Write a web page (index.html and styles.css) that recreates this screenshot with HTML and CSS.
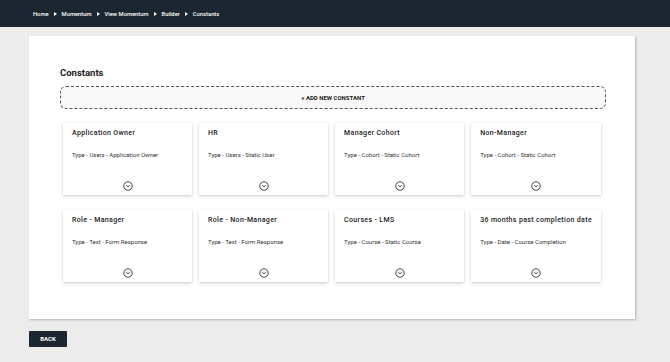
FILE: index.html
```html
<!DOCTYPE html>
<html lang="en">
<head>
    <meta charset="UTF-8">
    <meta name="viewport" content="width=device-width, initial-scale=1.0">
    <title>Constants</title>
    <link rel="stylesheet" href="styles.css">
</head>
<body>
    <div class="header">
        <div class="breadcrumb">
            <a href="#">Home</a>
            <span class="sep"></span>
            <a href="#">Momentum</a>
            <span class="sep"></span>
            <a href="#">View Momentum</a>
            <span class="sep"></span>
            <a href="#">Builder</a>
            <span class="sep"></span>
            <span>Constants</span>
        </div>
    </div>
    <div class="panel">
        <h1>Constants</h1>
        <button class="add-btn">+ ADD NEW CONSTANT</button>
        <div class="cards">
            <div class="card">
                <div class="card-title">Application Owner</div>
                <div class="card-type">Type - Users - Application Owner</div>
                <svg class="expand" viewBox="0 0 10 10"><circle cx="5" cy="5" r="4.2"/><path d="M3.2 4.2 L5 6 L6.8 4.2"/></svg>
            </div>
            <div class="card">
                <div class="card-title">HR</div>
                <div class="card-type">Type - Users - Static User</div>
                <svg class="expand" viewBox="0 0 10 10"><circle cx="5" cy="5" r="4.2"/><path d="M3.2 4.2 L5 6 L6.8 4.2"/></svg>
            </div>
            <div class="card">
                <div class="card-title">Manager Cohort</div>
                <div class="card-type">Type - Cohort - Static Cohort</div>
                <svg class="expand" viewBox="0 0 10 10"><circle cx="5" cy="5" r="4.2"/><path d="M3.2 4.2 L5 6 L6.8 4.2"/></svg>
            </div>
            <div class="card">
                <div class="card-title">Non-Manager</div>
                <div class="card-type">Type - Cohort - Static Cohort</div>
                <svg class="expand" viewBox="0 0 10 10"><circle cx="5" cy="5" r="4.2"/><path d="M3.2 4.2 L5 6 L6.8 4.2"/></svg>
            </div>
            <div class="card">
                <div class="card-title">Role - Manager</div>
                <div class="card-type">Type - Text - Form Response</div>
                <svg class="expand" viewBox="0 0 10 10"><circle cx="5" cy="5" r="4.2"/><path d="M3.2 4.2 L5 6 L6.8 4.2"/></svg>
            </div>
            <div class="card">
                <div class="card-title">Role - Non-Manager</div>
                <div class="card-type">Type - Text - Form Response</div>
                <svg class="expand" viewBox="0 0 10 10"><circle cx="5" cy="5" r="4.2"/><path d="M3.2 4.2 L5 6 L6.8 4.2"/></svg>
            </div>
            <div class="card">
                <div class="card-title">Courses - LMS</div>
                <div class="card-type">Type - Course - Static Course</div>
                <svg class="expand" viewBox="0 0 10 10"><circle cx="5" cy="5" r="4.2"/><path d="M3.2 4.2 L5 6 L6.8 4.2"/></svg>
            </div>
            <div class="card">
                <div class="card-title">36 months past completion date</div>
                <div class="card-type">Type - Date - Course Completion</div>
                <svg class="expand" viewBox="0 0 10 10"><circle cx="5" cy="5" r="4.2"/><path d="M3.2 4.2 L5 6 L6.8 4.2"/></svg>
            </div>
        </div>
    </div>
    <div class="footer">
        <button class="back-btn">BACK</button>
    </div>
</body>
</html>
```
FILE: styles.css
```css
body {
    font-family: Roboto, "Liberation Sans", sans-serif;
    margin: 0;
    padding: 0;
    background-color: #ececec;
    color: #222;
}

.header {
    height: 27px;
    background-color: #1b2630;
    display: flex;
    align-items: center;
    padding-left: 33px;
}

.breadcrumb {
    display: flex;
    align-items: center;
    gap: 5px;
    font-size: 5.8px;
    font-weight: 500;
    color: #fff;
}

.breadcrumb a {
    color: #fff;
    text-decoration: none;
}

.breadcrumb .sep {
    width: 0;
    height: 0;
    border-top: 2px solid transparent;
    border-bottom: 2px solid transparent;
    border-left: 3px solid #fff;
}

.panel {
    width: 546px;
    margin: 9px 0 0 29px;
    padding: 31px 29px 37px 31px;
    background-color: #fff;
    box-shadow: 1px 1px 2px rgba(0, 0, 0, 0.25);
}

h1 {
    margin: 0 0 7px;
    font-size: 9.5px;
    line-height: 12px;
    font-weight: 700;
    color: #222;
}

.add-btn {
    display: block;
    width: 100%;
    height: 23px;
    margin: 0 0 14px;
    padding: 0;
    background-color: #f8f8f8;
    border: 1px dashed #555;
    border-radius: 6px;
    font-family: inherit;
    font-size: 6px;
    font-weight: 700;
    color: #222;
    cursor: pointer;
}

.cards {
    display: grid;
    grid-template-columns: repeat(4, 1fr);
    column-gap: 7px;
    row-gap: 15px;
    margin: 0 5px 0 3px;
}

.card {
    height: 72px;
    box-sizing: border-box;
    padding: 5px 9px 4px;
    display: flex;
    flex-direction: column;
    background-color: #fff;
    box-shadow: 0 1px 3px rgba(0, 0, 0, 0.22);
}

.card-title {
    font-size: 7px;
    line-height: 10px;
    font-weight: 500;
    letter-spacing: 0.35px;
    color: #222;
    white-space: nowrap;
}

.card-type {
    margin-top: 13px;
    font-size: 6px;
    line-height: 8px;
    color: #333;
}

.expand {
    margin: auto auto 0;
    width: 10px;
    height: 10px;
}

.expand circle,
.expand path {
    fill: none;
    stroke: #333;
    stroke-width: 0.9;
}

.footer {
    padding: 7px 0 0 29px;
}

.back-btn {
    width: 38px;
    height: 16px;
    padding: 0;
    background-color: #1b2630;
    border: none;
    border-radius: 1px;
    font-family: inherit;
    font-size: 6px;
    font-weight: 700;
    color: #fff;
    cursor: pointer;
}
```
